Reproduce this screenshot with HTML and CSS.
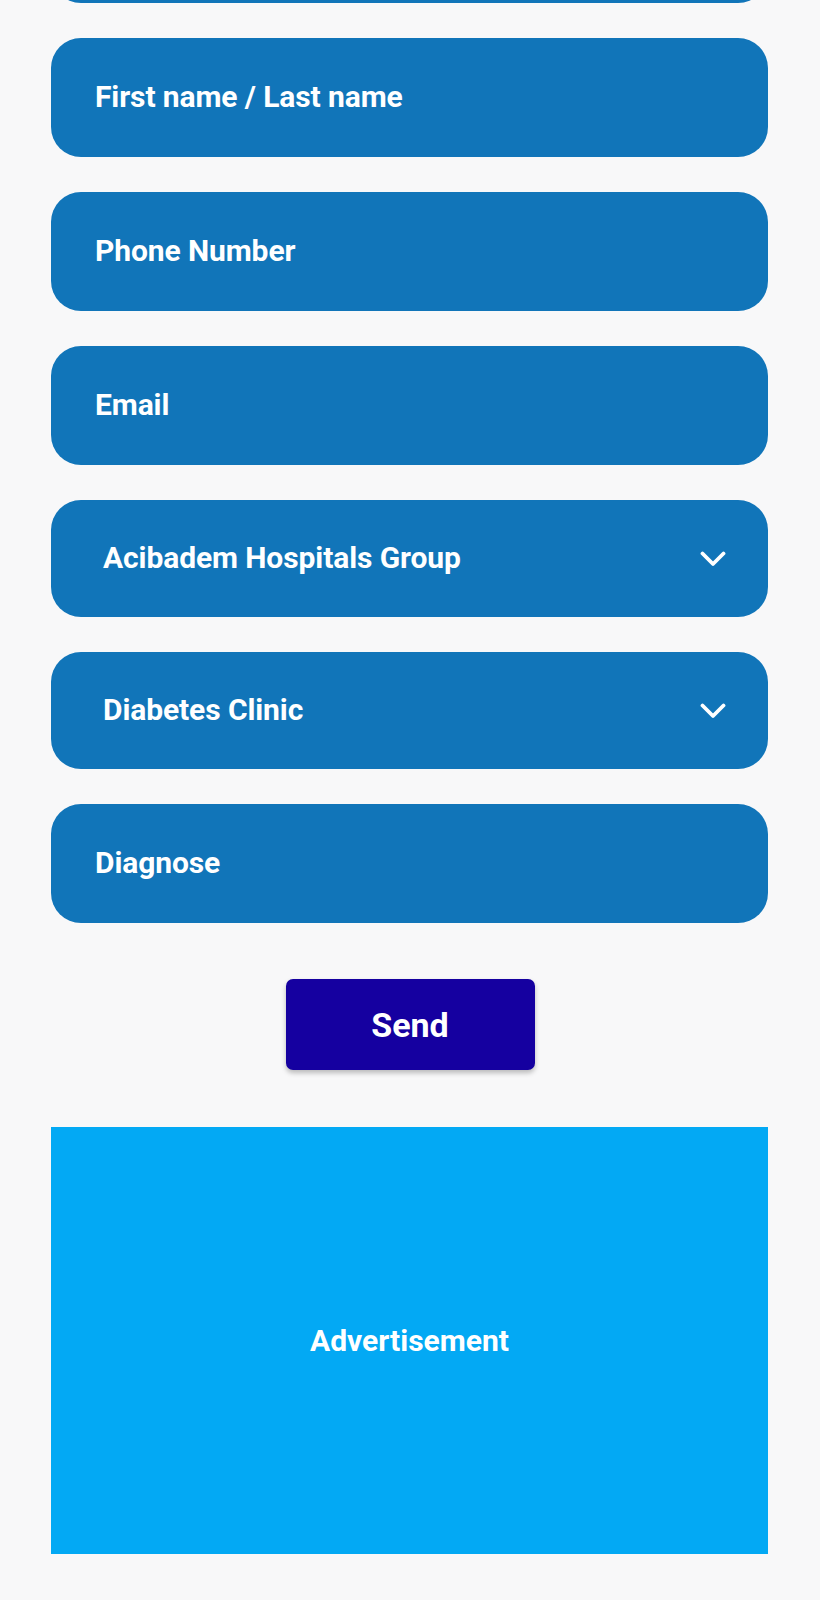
FILE: index.html
```html
<!DOCTYPE html>
<html lang="en">
<head>
<meta charset="utf-8">
<title>Appointment form</title>
<link rel="stylesheet" href="styles.css">
</head>
<body>
<main class="page">
  <form class="form">
    <div class="field field-offscreen"></div>
    <div class="field"><span class="label">First name / Last name</span></div>
    <div class="field"><span class="label">Phone Number</span></div>
    <div class="field"><span class="label">Email</span></div>
    <div class="field select">
      <span class="label">Acibadem Hospitals Group</span>
      <svg class="chevron" viewBox="0 0 26 16" width="26" height="16" aria-hidden="true"><path d="M2.5 2.5 L13 13 L23.5 2.5" fill="none" stroke="#fff" stroke-width="3.8" stroke-linecap="round" stroke-linejoin="round"/></svg>
    </div>
    <div class="field select">
      <span class="label">Diabetes Clinic</span>
      <svg class="chevron" viewBox="0 0 26 16" width="26" height="16" aria-hidden="true"><path d="M2.5 2.5 L13 13 L23.5 2.5" fill="none" stroke="#fff" stroke-width="3.8" stroke-linecap="round" stroke-linejoin="round"/></svg>
    </div>
    <div class="field"><span class="label">Diagnose</span></div>
    <div class="actions">
      <button type="button" class="send">Send</button>
    </div>
  </form>
  <section class="ad"><span>Advertisement</span></section>
</main>
</body>
</html>
```

FILE: styles.css
```css
html, body {
  margin: 0;
  padding: 0;
  background: #f8f8f9;
}
body {
  font-family: Roboto, "Noto Sans", "Liberation Sans", sans-serif;
  color: #fff;
}
.page {
  padding: 0 52px 0 51px;
}
.form {
  display: flex;
  flex-direction: column;
  gap: 35px;
}
.field {
  box-sizing: border-box;
  height: 119px;
  background: #1175b9;
  border-radius: 30px;
  display: flex;
  align-items: center;
  padding: 0 44px;
}
.field-offscreen {
  margin-top: -116px;
}
.field.select {
  height: 117px;
  padding: 0 42px 0 52px;
  justify-content: space-between;
}
.label {
  font-size: 30px;
  font-weight: 700;
  letter-spacing: -0.1px;
  line-height: 1;
  margin-top: -2px;
}
.chevron {
  display: block;
}
.actions {
  display: flex;
  justify-content: center;
  margin-top: 21px;
}
.send {
  width: 249px;
  height: 91px;
  border: none;
  border-radius: 7px;
  background: #1500a0;
  color: #fff;
  font-family: Roboto, "Noto Sans", "Liberation Sans", sans-serif;
  font-size: 34px;
  font-weight: 700;
  box-shadow: 0 3px 5px rgba(0, 0, 0, 0.25);
  margin-left: 1px;
}
.ad {
  margin-top: 57px;
  height: 427px;
  background: #03a9f4;
  display: flex;
  align-items: center;
  justify-content: center;
}
.ad span {
  font-size: 30px;
  font-weight: 700;
}
```
